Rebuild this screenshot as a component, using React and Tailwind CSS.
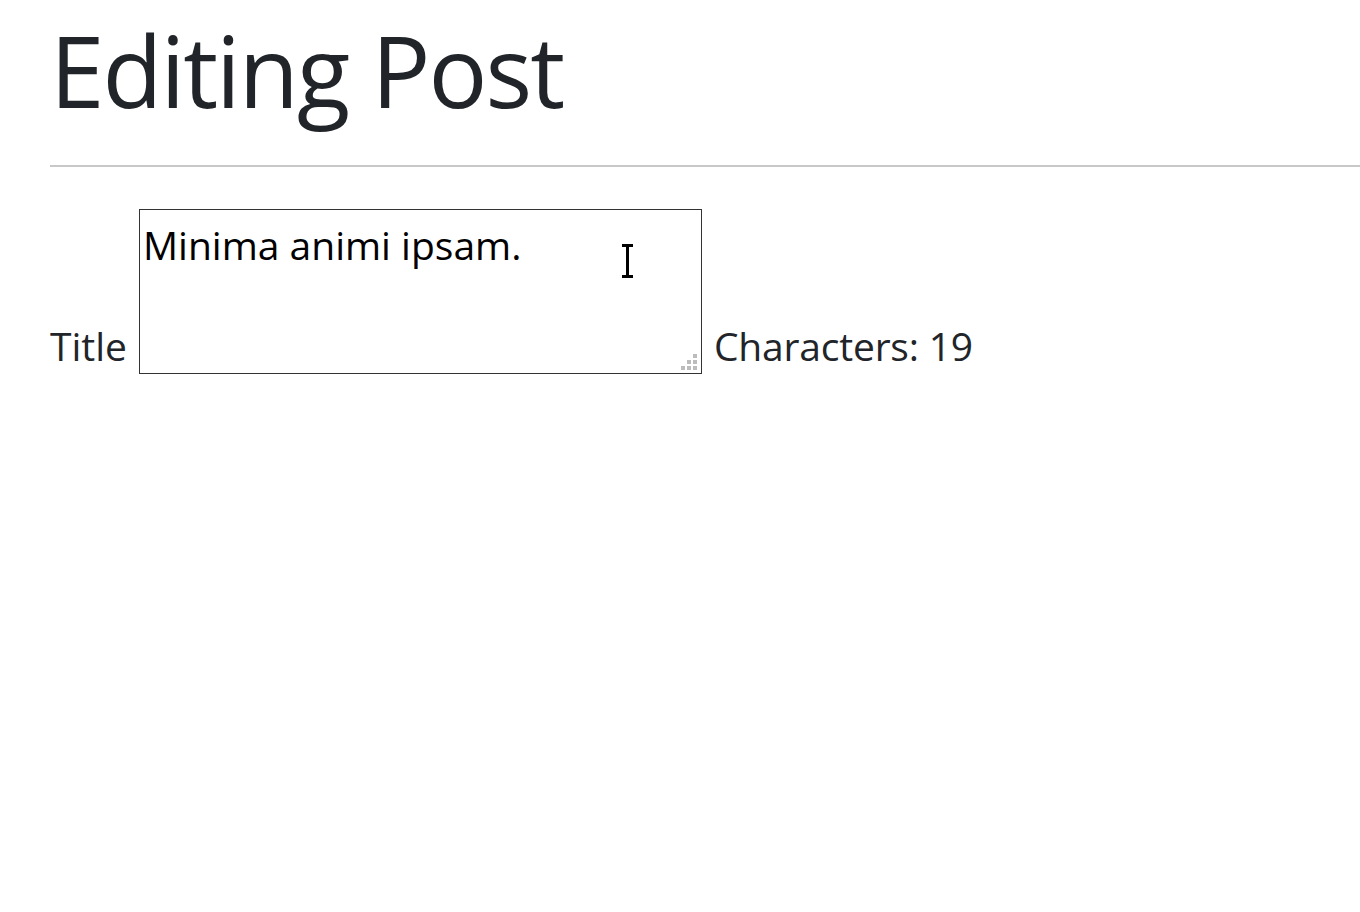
import React, { useState } from "react";

const TextCursor = () => (
  <svg
    width="12"
    height="34"
    viewBox="0 0 12 34"
    className="pointer-events-none absolute left-[483px] top-[35px]"
  >
    <rect x="0" y="0" width="11" height="3" fill="#000" />
    <rect x="4" y="2" width="3" height="30" fill="#000" />
    <rect x="0" y="31" width="11" height="3" fill="#000" />
  </svg>
);

const ResizeGrip = () => (
  <div className="pointer-events-none absolute bottom-[4px] right-[5px] grid grid-cols-3 gap-[2px]">
    {[0, 0, 1, 0, 1, 1, 1, 1, 1].map((on, i) => (
      <span
        key={i}
        className={on ? "block w-[4px] h-[4px] bg-[#bcbcbc]" : "block w-[4px] h-[4px]"}
      />
    ))}
  </div>
);

export default function App() {
  const [title, setTitle] = useState("Minima animi ipsam.");

  return (
    <div
      className="min-h-screen bg-white pl-[50px] text-[#212529]"
      style={{ fontFamily: '"Open Sans", "Noto Sans", sans-serif' }}
    >
      <h1 className="pt-[8px] text-[98px] leading-[124px] font-normal tracking-[-2px]">
        Editing Post
      </h1>
      <hr className="mt-[33px] border-0 border-t-2 border-[#c8c8c8]" />

      <div className="mt-[42px] flex items-end gap-[12px]">
        <span className="pb-[4px] text-[39px] leading-[48px]">Title</span>
        <div className="relative">
          <textarea
            value={title}
            onChange={(e) => setTitle(e.target.value)}
            className="block w-[563px] h-[165px] resize-none border border-[#333] bg-white px-[3px] pt-[11px] pb-[4px] text-[39px] leading-[48px] text-black outline-none"
            style={{ fontFamily: '"Open Sans", "Noto Sans", sans-serif' }}
          />
          <ResizeGrip />
          <TextCursor />
        </div>
        <span className="pb-[4px] text-[39px] leading-[48px] tracking-[-0.2px]">
          Characters: {title.length}
        </span>
      </div>
    </div>
  );
}
